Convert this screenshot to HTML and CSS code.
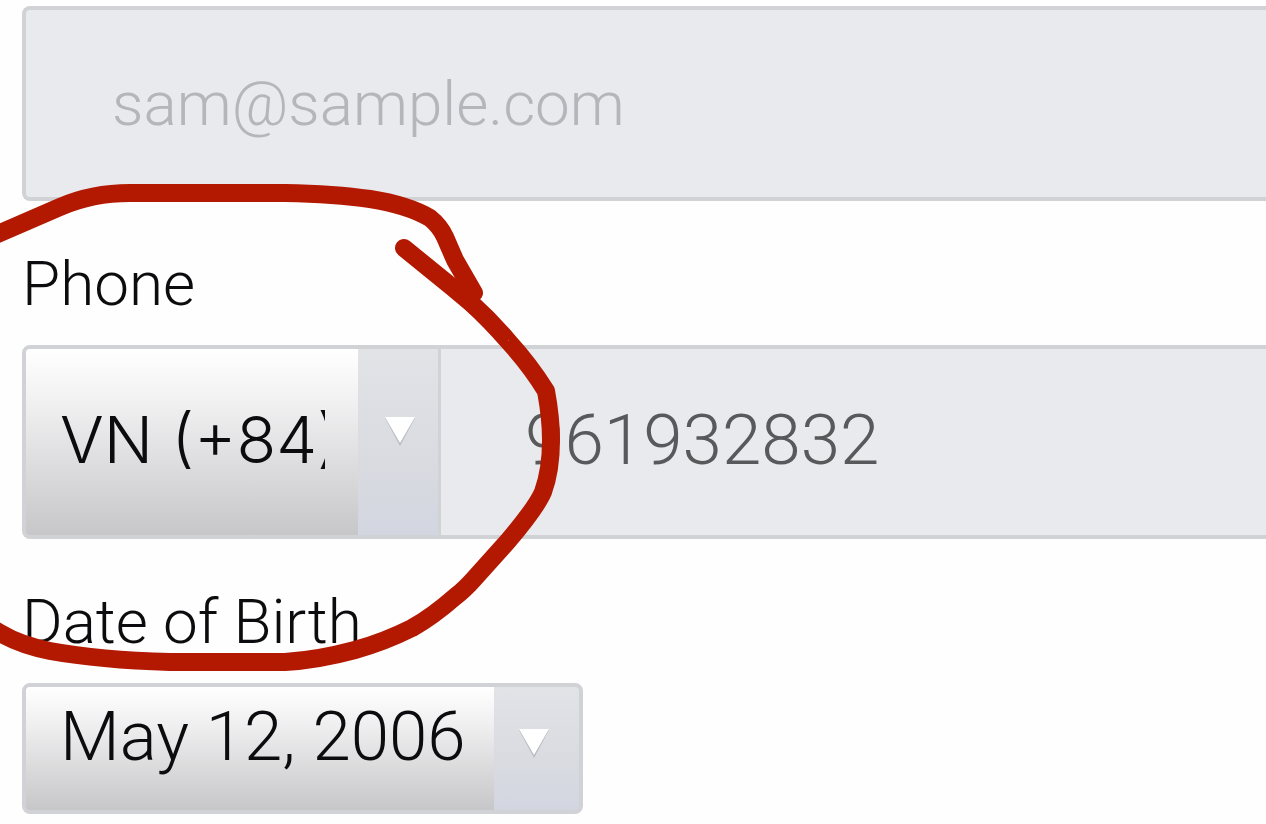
FILE: index.html
```html
<!DOCTYPE html>
<html lang="en">
<head>
<meta charset="utf-8">
<title>Contact details</title>
<link rel="stylesheet" href="styles.css">
</head>
<body>
<form class="form">
  <input class="field email" type="email" aria-label="Email" placeholder="sam@sample.com">

  <label class="label" for="phone">Phone</label>
  <div class="phone-row">
    <div class="picker picker-code">
      <select class="picker-select" aria-label="Country code">
        <option>VN (+84)</option>
      </select>
      <svg class="arrow" viewBox="0 0 32 32" aria-hidden="true"><path class="arrow-shade" d="M1 3h30L16 31z"/><path class="arrow-face" d="M1 2h30L16 28z"/></svg>
    </div>
    <input class="field phone" id="phone" type="tel" value="961932832">
  </div>

  <label class="label" for="birth">Date of Birth</label>
  <div class="picker picker-date">
    <select class="picker-select" id="birth">
      <option>May 12, 2006</option>
    </select>
    <svg class="arrow" viewBox="0 0 32 32" aria-hidden="true"><path class="arrow-shade" d="M1 3h30L16 31z"/><path class="arrow-face" d="M1 2h30L16 28z"/></svg>
  </div>
</form>
<svg class="marker" width="600" height="700" viewBox="0 0 600 700" aria-hidden="true">
  <path d="M-12 238L0 233L60 207Q92 193 130 193H285Q335 194 370 199Q408 205 430 218Q440 226 445 237L455 260L474 293"/>
  <path d="M404 248L452 287L470 302Q490 320 508 341Q530 365 546 391Q551 418 551 440Q551 470 543 492Q536 508 508 541L473 580Q464 590 456 596Q432 617 412 628Q384 642 355 650Q318 660 285 662H170Q100 660 50 651Q20 645 0 633L-12 626"/>
</svg>
</body>
</html>
```
FILE: styles.css
```css
* {
  box-sizing: border-box;
}

body {
  margin: 0;
  background: #fefefe;
  color: #0c0c0e;
  font-family: Roboto, "Liberation Sans", sans-serif;
  font-weight: 300;
  overflow: hidden;
}

.form {
  display: flex;
  flex-direction: column;
  padding: 6px 0 10px 22px;
}

.field {
  min-width: 0;
  margin: 0;
  border: 4px solid #d0d2d6;
  border-right: 0;
  border-radius: 8px 0 0 8px;
  background: #e9eaee;
  font: inherit;
  outline: 0;
}

.email {
  width: 100%;
  height: 195px;
  padding: 0 0 0 86px;
  font-size: 62px;
}

.email::placeholder {
  color: #b4b6ba;
  opacity: 1;
}

.label {
  padding: 43px 0 21px;
  font-size: 62px;
  line-height: 80px;
}

.phone-row {
  display: flex;
  height: 194px;
}

.phone {
  flex: 1;
  border-left: 0;
  border-radius: 0;
  padding: 0 0 6px 84px;
  color: #58595b;
  font-size: 71px;
}

.picker {
  display: grid;
  align-items: center;
  border: 4px solid #d0d2d6;
  border-radius: 8px;
  background: linear-gradient(#e1e3e7, #d9dbe0 60%, #d2d6e0);
  overflow: hidden;
}

.picker-code {
  grid-template-columns: 332px 80px;
  border-right-width: 3px;
  border-radius: 8px 0 0 8px;
}

.picker-date {
  grid-template-columns: 468px 85px;
  align-self: flex-start;
  height: 131px;
}

.picker-select {
  grid-area: 1 / 1 / 2 / 3;
  width: 100%;
  height: 100%;
  margin: 0;
  border: 0;
  border-radius: 0;
  appearance: none;
  background: linear-gradient(#ffffff, #f4f4f5 22%, #c7c7c9) no-repeat;
  color: inherit;
  font: inherit;
  outline: 0;
}

.picker-code .picker-select {
  padding: 0 113px 6px 34px;
  background-size: 332px 100%;
  font-family: Inter, "Liberation Sans", sans-serif;
  font-size: 65px;
}

.picker-date .picker-select {
  padding: 0 84px 24px 34px;
  background-size: 468px 100%;
  font-size: 69px;
}

.arrow {
  grid-area: 1 / 2;
  justify-self: center;
  width: 32px;
  height: 32px;
  pointer-events: none;
}

.picker-code .arrow {
  margin: 0 0 22px 4px;
}

.picker-date .arrow {
  margin: 0 6px 12px 0;
}

.arrow-shade {
  fill: #b9bbc0;
}

.arrow-face {
  fill: #ffffff;
}

.marker {
  position: absolute;
  top: 0;
  left: 0;
  pointer-events: none;
}

.marker path {
  fill: none;
  stroke: #b31900;
  stroke-width: 18;
  stroke-linecap: round;
  stroke-linejoin: round;
}
```
